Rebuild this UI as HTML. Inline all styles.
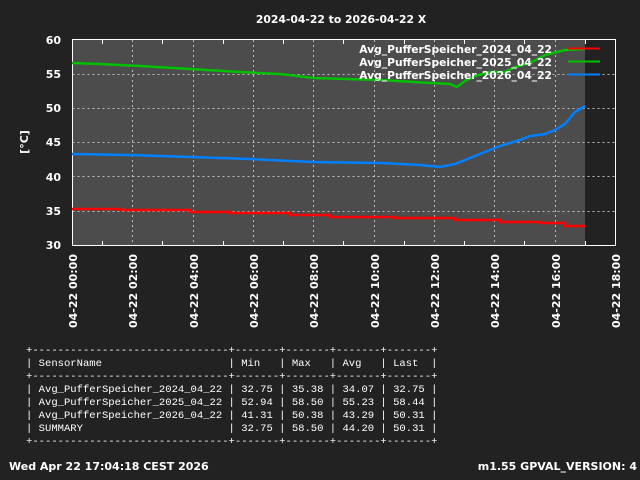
<!DOCTYPE html>
<html><head><meta charset="utf-8"><style>
html,body{margin:0;padding:0;background:#222;}
body{width:640px;height:480px;position:relative;overflow:hidden;}
svg{position:absolute;left:0;top:0;}
pre{position:absolute;left:26px;top:345px;margin:0;font-family:"Liberation Mono",monospace;font-size:10.55px;line-height:13px;color:#fff;}
</style></head><body>
<svg width="640" height="480" xmlns="http://www.w3.org/2000/svg" font-family="DejaVu Sans, Liberation Sans, sans-serif" font-weight="bold">
<rect x="72" y="40" width="513" height="205" fill="#4c4c4c"/>
<g stroke="#bbb" stroke-width="1" stroke-dasharray="2,3" fill="none">
<path d="M72.5 74.5H615M72.5 108.5H615M72.5 142.5H615M72.5 176.5H615M72.5 211.5H615"/>
<path d="M132.5 40V245M193.5 40V245M253.5 40V245M313.5 40V245M374.5 40V245M434.5 40V245M494.5 40V245M555.5 40V245"/>
</g>
<g stroke="#fff" stroke-width="1" fill="none">
<rect x="72.5" y="39.5" width="543" height="206"/>
<path d="M102.5 245v-4M162.5 245v-4M223.5 245v-4M283.5 245v-4M343.5 245v-4M404.5 245v-4M464.5 245v-4M524.5 245v-4M585.5 245v-4"/>
<path d="M102.5 40v4M162.5 40v4M223.5 40v4M283.5 40v4M343.5 40v4M404.5 40v4M464.5 40v4M524.5 40v4M585.5 40v4"/>
</g>
<polyline fill="none" stroke="#f00" stroke-width="2.5" points="72,209 120,209 120,210 190,210 190,212 230,212 230,213 290,213 290,215 330,215 330,217 395,217 395,218 455,218 455,220 500,220 500,222 540,222 540,223 565,223 565,226 585,226"/>
<polyline fill="none" stroke="#00c000" stroke-width="2.5" points="72,63 100,64 140,66 190,69 240,72 280,74 313,78 380,80 430,83 450,84 457,87 465,81 475,76 490,72 505,72 515,67 530,63 545,55 565,50 585,49"/>
<polyline fill="none" stroke="#0080ff" stroke-width="2.5" points="72,154 130,155 190,157 250,159 313,162 380,163 420,165 440,167 455,164 470,158 485,152 500,146 510,143 520,140 530,136 545,134 555,130 565,124 575,112 585,106"/>
<g fill="#fff" font-size="11">
<text x="341" y="23" text-anchor="middle" font-size="10.8">2024-04-22 to 2026-04-22 X</text>
<text x="61" y="44" text-anchor="end">60</text>
<text x="61" y="78" text-anchor="end">55</text>
<text x="61" y="112" text-anchor="end">50</text>
<text x="61" y="146" text-anchor="end">45</text>
<text x="61" y="181" text-anchor="end">40</text>
<text x="61" y="215" text-anchor="end">35</text>
<text x="61" y="249" text-anchor="end">30</text>
<text transform="translate(28,142) rotate(-90)" text-anchor="middle">[°C]</text>
<g font-size="10.7">
<text x="552" y="53" text-anchor="end">Avg_PufferSpeicher_2024_04_22</text>
<text x="552" y="66" text-anchor="end">Avg_PufferSpeicher_2025_04_22</text>
<text x="552" y="79" text-anchor="end">Avg_PufferSpeicher_2026_04_22</text>
</g>
<g text-anchor="end">
<text transform="translate(77,254) rotate(-90)">04-22 00:00</text>
<text transform="translate(137,254) rotate(-90)">04-22 02:00</text>
<text transform="translate(198,254) rotate(-90)">04-22 04:00</text>
<text transform="translate(258,254) rotate(-90)">04-22 06:00</text>
<text transform="translate(318,254) rotate(-90)">04-22 08:00</text>
<text transform="translate(379,254) rotate(-90)">04-22 10:00</text>
<text transform="translate(439,254) rotate(-90)">04-22 12:00</text>
<text transform="translate(499,254) rotate(-90)">04-22 14:00</text>
<text transform="translate(560,254) rotate(-90)">04-22 16:00</text>
<text transform="translate(620,254) rotate(-90)">04-22 18:00</text>
</g>
<text x="9" y="470">Wed Apr 22 17:04:18 CEST 2026</text>
<text x="637" y="470" text-anchor="end">m1.55 GPVAL_VERSION: 4</text>
</g>
<path d="M568 48.5H600" stroke="#f00" stroke-width="2"/>
<path d="M568 61.5H600" stroke="#00c000" stroke-width="2"/>
<path d="M568 74.5H600" stroke="#0080ff" stroke-width="2"/>
</svg>
<pre>+-------------------------------+-------+-------+-------+-------+
| SensorName                    | Min   | Max   | Avg   | Last  |
+-------------------------------+-------+-------+-------+-------+
| Avg_PufferSpeicher_2024_04_22 | 32.75 | 35.38 | 34.07 | 32.75 |
| Avg_PufferSpeicher_2025_04_22 | 52.94 | 58.50 | 55.23 | 58.44 |
| Avg_PufferSpeicher_2026_04_22 | 41.31 | 50.38 | 43.29 | 50.31 |
| SUMMARY                       | 32.75 | 58.50 | 44.20 | 50.31 |
+-------------------------------+-------+-------+-------+-------+</pre>
</body></html>
